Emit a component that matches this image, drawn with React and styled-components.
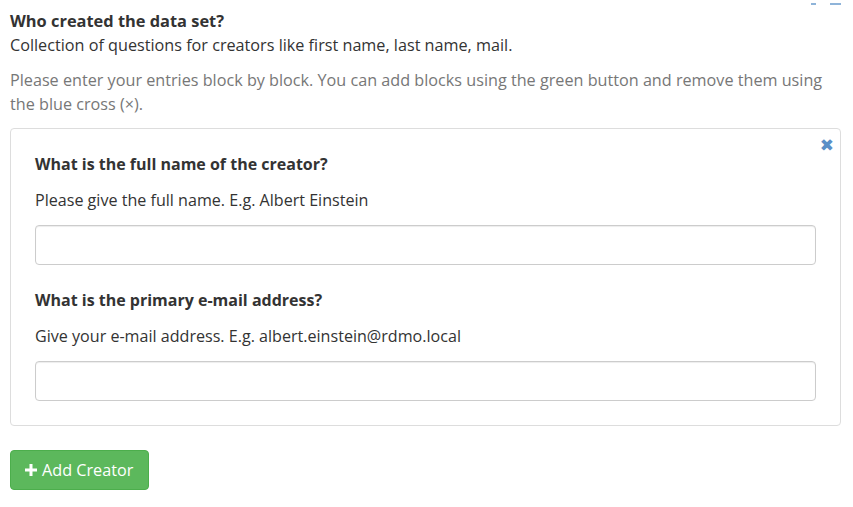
import React from 'react';
import styled, { createGlobalStyle } from 'styled-components';

const GlobalStyle = createGlobalStyle`
  body {
    margin: 0;
    background: #ffffff;
    font-family: "Open Sans", "Noto Sans", sans-serif;
    color: #333333;
  }
`;

const Page = styled.div`
  position: relative;
  padding: 9px 12px 0 10px;
  width: 853px;
  box-sizing: border-box;
`;

const TopMarks = styled.div`
  position: absolute;
  top: 3px;
  right: 12px;
  display: flex;
  gap: 14px;
`;

const Mark = styled.span`
  display: block;
  width: ${p => p.w}px;
  height: 2px;
  background: #8fb4d9;
`;

const Title = styled.div`
  font-weight: 700;
  font-size: 16.4px;
  line-height: 24px;
`;

const Subtitle = styled.div`
  font-size: 16.2px;
  line-height: 24px;
`;

const Help = styled.p`
  margin: 11px 0 12px;
  font-size: 16.2px;
  line-height: 24px;
  color: #777777;
`;

const Panel = styled.div`
  position: relative;
  border: 1px solid #dddddd;
  border-radius: 4px;
  padding: 24px;
  display: flex;
  flex-direction: column;
`;

const Remove = styled.button`
  position: absolute;
  top: 8px;
  right: 6px;
  border: none;
  background: none;
  padding: 0;
  color: #5b8fc7;
  font-size: 17px;
  font-weight: 900;
  line-height: 1;
  cursor: pointer;
  font-family: "DejaVu Sans", sans-serif;
`;

const Field = styled.div`
  display: flex;
  flex-direction: column;
  & + & {
    margin-top: 24px;
  }
`;

const Label = styled.div`
  font-weight: 700;
  font-size: 16px;
  line-height: 22px;
`;

const FieldHelp = styled.div`
  margin-top: 14px;
  font-size: 16.1px;
  line-height: 22px;
`;

const Input = styled.input`
  margin-top: 14px;
  height: 40px;
  box-sizing: border-box;
  border: 1px solid #cccccc;
  border-radius: 4px;
  box-shadow: inset 0 1px 1px rgba(0, 0, 0, 0.075);
  padding: 6px 12px;
  font-size: 16px;
  font-family: inherit;
`;

const AddButton = styled.button`
  margin-top: 24px;
  display: inline-flex;
  align-items: center;
  gap: 5px;
  height: 40px;
  padding: 0 15px 0 14px;
  background: #5cb85c;
  border: 1px solid #4cae4c;
  border-radius: 4px;
  color: #ffffff;
  font-family: "Open Sans", "Noto Sans", sans-serif;
  font-size: 16.2px;
  cursor: pointer;
`;

const Plus = () => (
  <svg width="12" height="12" viewBox="0 0 12 12">
    <path d="M4.5 0h3v4.5H12v3H7.5V12h-3V7.5H0v-3h4.5z" fill="#ffffff" />
  </svg>
);

export default function App() {
  return (
    <Page>
      <GlobalStyle />
      <TopMarks>
        <Mark w={5} />
        <Mark w={11} />
      </TopMarks>
      <Title>Who created the data set?</Title>
      <Subtitle>Collection of questions for creators like first name, last name, mail.</Subtitle>
      <Help>
        Please enter your entries block by block. You can add blocks using the green button and remove them using
        the blue cross (×).
      </Help>
      <Panel>
        <Remove aria-label="remove">✖</Remove>
        <Field>
          <Label>What is the full name of the creator?</Label>
          <FieldHelp>Please give the full name. E.g. Albert Einstein</FieldHelp>
          <Input type="text" />
        </Field>
        <Field>
          <Label>What is the primary e-mail address?</Label>
          <FieldHelp>Give your e-mail address. E.g. albert.einstein@rdmo.local</FieldHelp>
          <Input type="text" />
        </Field>
      </Panel>
      <AddButton>
        <Plus />
        Add Creator
      </AddButton>
    </Page>
  );
}
